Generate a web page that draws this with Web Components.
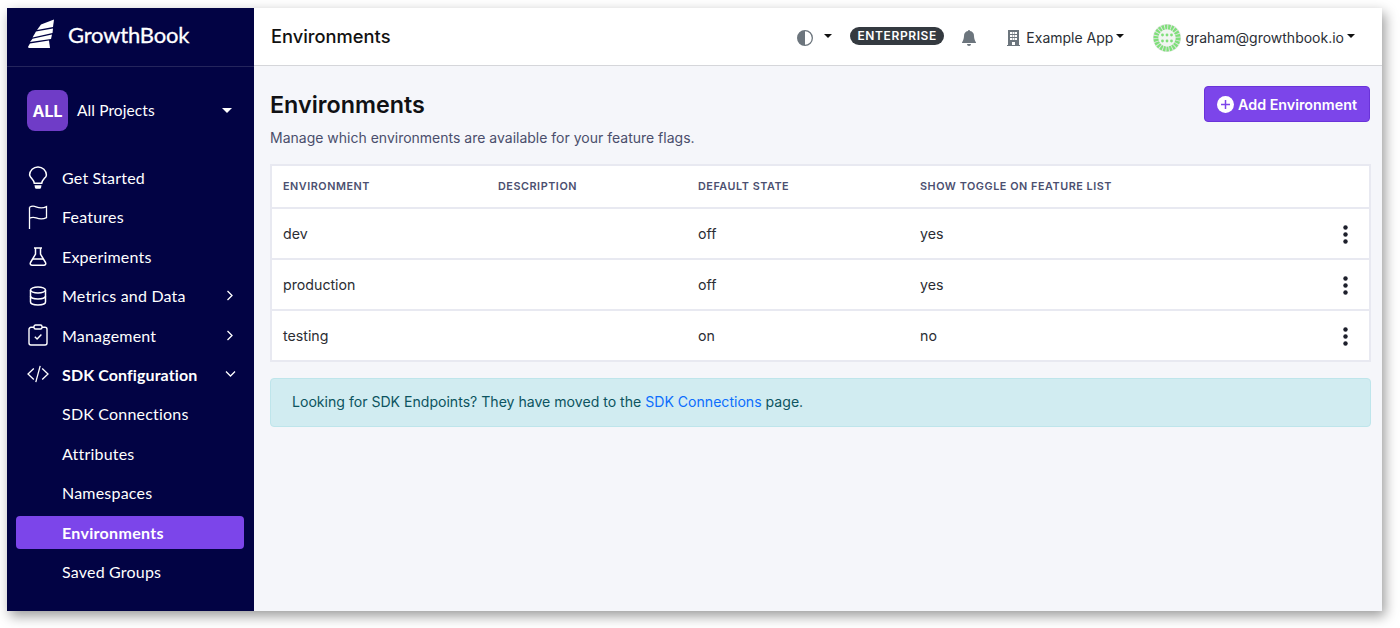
<!DOCTYPE html>
<html>
<head>
<meta charset="utf-8">
<title>Environments</title>
<style>
  html, body { margin: 0; height: 100%; background: #fff; overflow: hidden; }
  body { font-family: Inter, "Liberation Sans", sans-serif; }
</style>
</head>
<body>
<gb-window>
  <gb-sidebar slot="side">
    <gb-nav-item label="Get Started" icon="bulb"></gb-nav-item>
    <gb-nav-item label="Features" icon="flag"></gb-nav-item>
    <gb-nav-item label="Experiments" icon="flask"></gb-nav-item>
    <gb-nav-item label="Metrics and Data" icon="db" caret="right"></gb-nav-item>
    <gb-nav-item label="Management" icon="clip" caret="right"></gb-nav-item>
    <gb-nav-item label="SDK Configuration" icon="code" caret="down" open></gb-nav-item>
    <gb-nav-item label="SDK Connections"></gb-nav-item>
    <gb-nav-item label="Attributes"></gb-nav-item>
    <gb-nav-item label="Namespaces"></gb-nav-item>
    <gb-nav-item label="Environments" active></gb-nav-item>
    <gb-nav-item label="Saved Groups"></gb-nav-item>
  </gb-sidebar>
  <gb-topbar slot="top" heading="Environments"></gb-topbar>
  <gb-page-head heading="Environments" sub="Manage which environments are available for your feature flags."></gb-page-head>
  <gb-env-table></gb-env-table>
  <gb-alert>Looking for SDK Endpoints? They have moved to the <a href="#">SDK Connections</a> page.</gb-alert>
</gb-window>

<script>
const icons = {
  bulb: `<svg width="20" height="24" viewBox="0 0 20 24" fill="none" stroke="#fff" stroke-width="1.5"><path d="M6.3 17.2c0-2-1-3-2.6-4.8A8.2 8.2 0 0 1 1.6 9 8.3 8.3 0 0 1 10 .9 8.3 8.3 0 0 1 18.400 9c0 1.300-.7 2.400-2.100 3.400-1.600 1.800-2.600 2.800-2.600 4.800z"/><path d="M6.500 19.300h7l-.4 2.200c-.2.800-.8 1.300-1.500 1.300H8.400c-.7 0-1.300-.5-1.500-1.300z" fill="#fff" stroke="none"/></svg>`,
  flag: `<svg width="20" height="24" viewBox="0 0 20 24" fill="none" stroke="#fff" stroke-width="1.300"><path d="M1.500 24V2.200"/><path d="M1.500 2.200c2-1.200 4.500-1.200 6.500-.4 3 1.200 7 1.600 10.500-.2v11c-3.500 1.800-7 1.500-10.300.3-2.400-.8-4.700-.6-6.700.3"/></svg>`,
  flask: `<svg width="18" height="19" viewBox="0 0 18 19" fill="none" stroke="#fff" stroke-width="1.500" stroke-linejoin="round"><path d="M5 1h8M6.500 1v6.200L1.500 15.500c-.7 1.300.1 2.700 1.600 2.700h11.800c1.500 0 2.300-1.400 1.600-2.700l-5-8.300V1"/><path d="M4 12h10"/></svg>`,
  db: `<svg width="18" height="20" viewBox="0 0 18 20" fill="none" stroke="#fff" stroke-width="1.500"><ellipse cx="9" cy="4" rx="7.500" ry="3"/><path d="M1.500 4v12c0 1.700 3.400 3 7.500 3s7.500-1.300 7.500-3V4"/><path d="M1.500 10c0 1.700 3.400 3 7.500 3s7.500-1.300 7.500-3"/></svg>`,
  clip: `<svg width="20" height="22" viewBox="0 0 20 22" fill="none" stroke="#fff" stroke-width="1.400" stroke-linejoin="round"><path d="M6 3.300H3a2 2 0 0 0-2 2V19a2 2 0 0 0 2 2h14a2 2 0 0 0 2-2V5.300a2 2 0 0 0-2-2h-3"/><rect x="6" y="1" width="8" height="4" rx="1.500"/><path d="M6.800 12.800l2.300 2.300 4.300-4.600"/></svg>`,
  code: `<svg width="22" height="18" viewBox="0 0 22 18" fill="none" stroke="#fff" stroke-width="1.300"><path d="M6.800 3.500 1 9l5.800 5.500M15.200 3.500 21 9l-5.800 5.500M13.200.8 8.800 17.200"/></svg>`
};

const carets = {
  right: `<svg width="8" height="11" viewBox="0 0 8 11" fill="none" stroke="#fff" stroke-width="1.300"><path d="M1.500 1 6 5.500 1.500 10"/></svg>`,
  down: `<svg width="11" height="8" viewBox="0 0 11 8" fill="none" stroke="#fff" stroke-width="1.300"><path d="M1 1.500 5.500 6 10 1.500"/></svg>`
};

class GbWindow extends HTMLElement {
  constructor() {
    super();
    this.attachShadow({ mode: 'open' }).innerHTML = `
      <style>
        :host { display: flex; box-sizing: border-box; width: 1375px; height: 603px; margin: 8px 0 0 7px; background: #f5f6fa; box-shadow: 3px 5px 12px rgba(0,0,0,.4); overflow: hidden; }
        .col { flex: 1; min-width: 0; display: flex; flex-direction: column; }
        main { flex: 1; padding: 20px 12px 0 16px; display: flex; flex-direction: column; }
      </style>
      <slot name="side"></slot>
      <div class="col">
        <slot name="top"></slot>
        <main><slot></slot></main>
      </div>`;
  }
}

class GbSidebar extends HTMLElement {
  constructor() {
    super();
    this.attachShadow({ mode: 'open' }).innerHTML = `
      <style>
        :host { display: block; flex: none; width: 247px; height: 603px; background: #020344; color: #fff; font-family: Lato, sans-serif; overflow: hidden; }
        .logo { height: 59px; box-sizing: border-box; border-bottom: 1px solid #24255c; display: flex; align-items: center; padding-left: 21px; }
        .logo svg { margin-bottom: 7px; }
        .logo span { margin: 0 0 5px 11px; font-size: 22px; letter-spacing: -.2px; -webkit-text-stroke: .3px #fff; color: #fff; }
        .proj { display: flex; align-items: center; padding: 23px 0 0 20px; height: 41px; }
        .badge { width: 41px; height: 41px; border-radius: 8px; background: #6f3cc7; display: flex; align-items: center; justify-content: center; font: 700 16px Inter, sans-serif; }
        .name { margin: 0 0 2px 9px; font-size: 15.500px; letter-spacing: .1px; flex: 1; }
        .tri { width: 0; height: 0; border: 5px solid transparent; border-top: 5.500px solid #fff; border-bottom: 0; margin-right: 22px; }
        nav { padding: 30px 10px 0 9px; display: flex; flex-direction: column; gap: 6.400px; }
      </style>
      <div class="logo">
        <svg width="29" height="30" viewBox="0 0 29 30" fill="#fff"><path d="M26 .5 25 8 9 11 13 5.500z"/><path d="M25 9.500 24.500 14 4.500 18.500 8 12.500z"/><path d="M24 15.500 23 20 2 23 4.500 19.800z"/><path d="M21 21.500 22 29H1c-.8 0-1-.8-.8-1.500L2 24.500z"/></svg>
        <span>GrowthBook</span>
      </div>
      <div class="proj">
        <div class="badge">ALL</div>
        <div class="name">All Projects</div>
        <div class="tri"></div>
      </div>
      <nav><slot></slot></nav>`;
  }
}

class GbNavItem extends HTMLElement {
  connectedCallback() {
    if (this.shadowRoot) return;
    const icon = this.getAttribute('icon');
    const caret = this.getAttribute('caret');
    this.attachShadow({ mode: 'open' }).innerHTML = `
      <style>
        :host { display: flex; align-items: center; height: 33px; border-radius: 4px; padding-left: 11px; font-size: 16px; letter-spacing: .2px; color: #fff; }
        :host([active]) { background: #7c45ea; font-weight: 700; letter-spacing: .3px; }
        :host([open]) { font-weight: 700; letter-spacing: .1px; }
        .i { width: 22px; height: 33px; display: flex; align-items: center; justify-content: center; flex: none; margin-right: 13px; }
        .t { flex: 1; white-space: nowrap; }
        .c { width: 12px; display: flex; justify-content: center; margin-right: 8px; }
      </style>
      <span class="i">${icon ? icons[icon] : ''}</span>
      <span class="t">${this.getAttribute('label')}</span>
      ${caret ? `<span class="c">${carets[caret]}</span>` : ''}`;
  }
}

class GbTopbar extends HTMLElement {
  connectedCallback() {
    if (this.shadowRoot) return;
    this.attachShadow({ mode: 'open' }).innerHTML = `
      <style>
        :host { display: flex; align-items: center; height: 58px; box-sizing: border-box; background: #fff; border-bottom: 1px solid #d5d6da; padding-left: 17px; font-size: 14px; color: #2b2f36; }
        h1 { margin: 0 0 1px; font-size: 18.300px; font-weight: 500; color: #111; flex: 1; }
        .theme { display: flex; align-items: center; }
        .tri { width: 0; height: 0; border: 4.500px solid transparent; border-top: 4.500px solid #111; border-bottom: 0; }
        .pill { margin: 0 0 2px 18px; background: #343a40; color: #fff; border-radius: 10px; font-size: 12px; font-weight: 600; letter-spacing: .6px; padding: 2px 7.500px; line-height: 14px; }
        .bell { margin-left: 18px; display: flex; padding-top: 2px; }
        .org { margin-left: 31px; display: flex; align-items: center; padding-top: 2px; }
        .user { margin-left: 29px; display: flex; align-items: center; margin-right: 27px; padding-top: 2px; }
        .raise { margin-left: 3px; margin-bottom: 4px; }
      </style>
      <h1>${this.getAttribute('heading')}</h1>
      <div class="theme">
        <svg width="16" height="16" viewBox="0 0 16 16" fill="#6c757d" style="margin-top:2px"><path d="M8 0a8 8 0 1 0 0 16A8 8 0 0 0 8 0zm0 14.700V1.300a6.700 6.700 0 0 1 0 13.400z"/></svg>
        <span class="tri" style="margin-left:11px;margin-bottom:1px"></span>
      </div>
      <span class="pill">ENTERPRISE</span>
      <span class="bell"><svg width="14" height="16" viewBox="0 0 14 16" fill="#6c757d"><path d="M7 16a2 2 0 0 0 2-2H5a2 2 0 0 0 2 2z"/><path d="M7 0a1 1 0 0 0-1 1.100A5 5 0 0 0 2 6c0 1.100-.5 4.600-2 6.500V13h14v-.5C12.500 10.600 12 7.100 12 6a5 5 0 0 0-4-4.900A1 1 0 0 0 7 0z"/></svg></span>
      <div class="org">
        <svg width="13" height="16" viewBox="0 0 13 16" fill="#6c757d" style="margin-right:6px"><path d="M1 0h11v15h1v1H0v-1h1z"/><g fill="#fff"><rect x="3" y="2" width="2" height="2"/><rect x="5.500" y="2" width="2" height="2"/><rect x="8" y="2" width="2" height="2"/><rect x="3" y="5" width="2" height="2"/><rect x="5.500" y="5" width="2" height="2"/><rect x="8" y="5" width="2" height="2"/><rect x="3" y="8" width="2" height="2"/><rect x="5.500" y="8" width="2" height="2"/><rect x="8" y="8" width="2" height="2"/><rect x="5" y="12" width="3" height="3"/></g></svg>
        <span>Example App</span><span class="tri raise"></span>
      </div>
      <div class="user">
        <svg width="28" height="28" viewBox="0 0 28 28" style="margin-right:4px"><circle cx="14" cy="14" r="14" fill="#e2e6e2"/><circle cx="14" cy="14" r="11" fill="none" stroke="#7fe07a" stroke-width="5" stroke-dasharray="2.200 .9"/><circle cx="14" cy="14" r="8.500" fill="#f1f5f1"/><g fill="#7fe07a"><circle cx="9.500" cy="11" r="1.400"/><circle cx="14" cy="11" r="1.400"/><circle cx="18.500" cy="11" r="1.400"/><circle cx="9.500" cy="17" r="1.400"/><circle cx="14" cy="17" r="1.400"/><circle cx="18.500" cy="17" r="1.400"/></g></svg>
        <span>graham@growthbook.io</span><span class="tri raise"></span>
      </div>`;
  }
}

class GbPageHead extends HTMLElement {
  connectedCallback() {
    if (this.shadowRoot) return;
    this.attachShadow({ mode: 'open' }).innerHTML = `
      <style>
        :host { display: flex; justify-content: space-between; align-items: flex-start; height: 77.500px; }
        h1 { margin: 0 0 5px; font-size: 23.300px; line-height: 37px; font-weight: 600; color: #101114; }
        p { margin: 0; font-size: 14px; line-height: 20px; color: #4a4e6c; }
        button { font: 600 14.300px Inter, sans-serif; color: #fff; background: #7c45ea; border: 1px solid #6a33d9; border-radius: 4px; height: 36px; width: 166px; display: flex; align-items: center; justify-content: center; padding: 0; }
        svg { margin-right: 4px; }
      </style>
      <div>
        <h1>${this.getAttribute('heading')}</h1>
        <p>${this.getAttribute('sub')}</p>
      </div>
      <button><svg width="17" height="17" viewBox="0 0 17 17"><circle cx="8.500" cy="8.500" r="8.500" fill="#fff"/><path d="M8.500 4v9M4 8.500h9" stroke="#7c45ea" stroke-width="1.500"/></svg>Add Environment</button>`;
  }
}

class GbEnvTable extends HTMLElement {
  connectedCallback() {
    if (this.shadowRoot) return;
    const rows = [['dev', 'off', 'yes'], ['production', 'off', 'yes'], ['testing', 'on', 'no']];
    const dots = `<svg width="5" height="19" viewBox="0 0 5 19" fill="#1d1f2b" style="margin-top:2px"><circle cx="2.500" cy="2.500" r="2.200"/><circle cx="2.500" cy="9.500" r="2.200"/><circle cx="2.500" cy="16.500" r="2.200"/></svg>`;
    this.attachShadow({ mode: 'open' }).innerHTML = `
      <style>
        :host { display: block; }
        table { width: 1101px; table-layout: fixed; border-collapse: collapse; background: #fff; border: 2px solid #e8e9f1; font-size: 14.200px; color: #2b2d33; }
        th { height: 41px; padding: 0 0 0 13px; text-align: left; font-size: 10.800px; font-weight: 600; letter-spacing: .55px; color: #4b4f70; border-bottom: 2px solid #e8e9f1; }
        td { height: 49px; padding: 0 0 0 13px; border-bottom: 2px solid #e8e9f1; }
        th:first-child, td:first-child { padding-left: 11px; }
        tr:last-child td { border-bottom: 0; }
        td.m { text-align: right; padding: 0 21px 0 0; line-height: 0; }
      </style>
      <table>
        <colgroup><col style="width:214px"><col style="width:200px"><col style="width:222px"><col><col style="width:60px"></colgroup>
        <thead><tr><th>ENVIRONMENT</th><th>DESCRIPTION</th><th>DEFAULT STATE</th><th>SHOW TOGGLE ON FEATURE LIST</th><th></th></tr></thead>
        <tbody>
          ${rows.map(r => `<tr><td>${r[0]}</td><td></td><td>${r[1]}</td><td>${r[2]}</td><td class="m">${dots}</td></tr>`).join('')}
        </tbody>
      </table>`;
  }
}

class GbAlert extends HTMLElement {
  constructor() {
    super();
    this.attachShadow({ mode: 'open' }).innerHTML = `
      <style>
        :host { display: block; box-sizing: border-box; width: 1101px; margin-top: 16px; height: 49px; padding: 0 21px; line-height: 45px; background: #d1ecf1; border: 1px solid #bee5eb; border-radius: 4px; color: #0c5460; font-size: 14.090px; }
        ::slotted(a) { color: #0d6efd; text-decoration: none; }
      </style>
      <slot></slot>`;
  }
}

customElements.define('gb-window', GbWindow);
customElements.define('gb-sidebar', GbSidebar);
customElements.define('gb-nav-item', GbNavItem);
customElements.define('gb-topbar', GbTopbar);
customElements.define('gb-page-head', GbPageHead);
customElements.define('gb-env-table', GbEnvTable);
customElements.define('gb-alert', GbAlert);
</script>
</body>
</html>
